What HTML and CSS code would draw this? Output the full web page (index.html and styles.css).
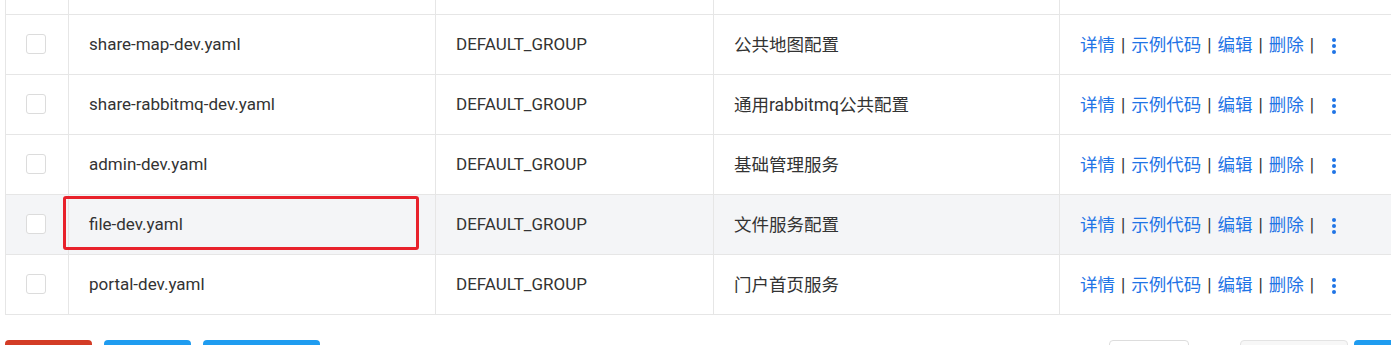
FILE: index.html
```html
<!DOCTYPE html>
<html lang="zh-CN">
<head>
  <meta charset="UTF-8" />
  <meta name="viewport" content="width=device-width, initial-scale=1.0" />
  <title>配置管理</title>
  <link rel="stylesheet" href="styles.css">
</head>
<body>
  <div class="page">
    <table class="config-table">
      <colgroup>
        <col class="col-check">
        <col class="col-id">
        <col class="col-group">
        <col class="col-desc">
        <col class="col-ops">
      </colgroup>
      <tbody id="configRows">
        <tr class="spacer-row"><td></td><td></td><td></td><td></td><td></td></tr>
      </tbody>
    </table>

    <div class="footer">
      <div class="batch">
        <button class="btn btn-danger" title="删除"></button>
        <button class="btn btn-primary" title="克隆"></button>
        <button class="btn btn-primary btn-wide" title="导出选中的配置"></button>
      </div>
      <div class="pager">
        <button class="pager-size" title="每页条数"></button>
        <button class="pager-prev" title="上一页"></button>
        <button class="pager-page" title="1"></button>
      </div>
    </div>
  </div>

  <script>
    const configs = [
      { id: "share-map-dev.yaml", group: "DEFAULT_GROUP", desc: "公共地图配置" },
      { id: "share-rabbitmq-dev.yaml", group: "DEFAULT_GROUP", desc: "通用rabbitmq公共配置" },
      { id: "admin-dev.yaml", group: "DEFAULT_GROUP", desc: "基础管理服务" },
      { id: "file-dev.yaml", group: "DEFAULT_GROUP", desc: "文件服务配置", active: true },
      { id: "portal-dev.yaml", group: "DEFAULT_GROUP", desc: "门户首页服务" }
    ];

    const ops = ["详情", "示例代码", "编辑", "删除"];

    function renderRows() {
      const body = document.getElementById("configRows");
      configs.forEach(cfg => {
        const tr = document.createElement("tr");
        if (cfg.active) tr.className = "is-hover";

        const links = ops.map(o => `<a class="op-link" href="#">${o}</a><span class="op-sep">|</span>`).join("");
        tr.innerHTML = `
          <td><span class="checkbox"></span></td>
          <td class="cell-id">${cfg.id}${cfg.active ? '<span class="mark"></span>' : ""}</td>
          <td>${cfg.group}</td>
          <td class="cell-desc">${cfg.desc}</td>
          <td class="cell-ops">${links}<a class="op-more" href="#"><svg width="4" height="16" viewBox="0 0 4 16"><circle cx="2" cy="2" r="2"/><circle cx="2" cy="8" r="2"/><circle cx="2" cy="14" r="2"/></svg></a></td>`;
        body.appendChild(tr);
      });
    }

    renderRows();
  </script>
</body>
</html>
```

FILE: styles.css
```css
html, body {
  margin: 0;
  overflow: hidden;
  background: #fff;
}

body {
  font-family: Roboto, "Noto Sans CJK SC", sans-serif;
  font-size: 17px;
  color: #333;
}

.page {
  padding-left: 5px;
  margin-top: -46px;
}

.config-table {
  border-collapse: collapse;
  table-layout: fixed;
  width: 1420px;
  border: 1px solid #e6e6e6;
}

.col-check { width: 63px; }
.col-id { width: 367px; }
.col-group { width: 278px; }
.col-desc { width: 346px; }

.config-table td {
  height: 57px;
  padding: 0 0 2px 20px;
  border: 1px solid #e6e6e6;
  vertical-align: middle;
  white-space: nowrap;
}

.config-table td.cell-desc,
.config-table td.cell-ops {
  font-size: 17.5px;
}

.config-table tr.is-hover td {
  background: #f4f5f7;
}

.checkbox {
  display: block;
  width: 18px;
  height: 18px;
  border: 1px solid #dcdcdc;
  border-radius: 3px;
  background: #fff;
}

.cell-id {
  position: relative;
}

/* red highlight frame around the selected data id */
.mark {
  position: absolute;
  left: -6px;
  top: 1px;
  width: 350px;
  height: 48px;
  border: 3px solid #e8212b;
  border-radius: 3px;
}

.op-link {
  color: #1f74e6;
  text-decoration: none;
}

.op-sep {
  color: #333;
  margin: 0 6px;
}

.op-more {
  display: inline-block;
  margin-left: 12px;
  vertical-align: middle;
  fill: #1f74e6;
}

.op-more svg {
  display: block;
}

.footer {
  display: flex;
  justify-content: space-between;
  margin-top: 25px;
}

.batch {
  display: flex;
  gap: 12px;
}

.btn {
  width: 87px;
  height: 32px;
  border: 0;
  border-radius: 4px;
}

.btn-wide {
  width: 117px;
}

.btn-danger {
  background: #d33c26;
}

.btn-primary {
  background: #1f9cf0;
}

.pager {
  display: flex;
  gap: 6px;
  margin-right: -40px;
}

.pager button {
  height: 32px;
  border-radius: 4px;
}

.pager-size {
  width: 80px;
  margin-right: 45px;
  background: #fff;
  border: 1px solid #ddd;
}

.pager-prev {
  width: 108px;
  background: #f7f7f7;
  border: 1px solid #e3e3e3;
}

.pager-page {
  width: 77px;
  background: #1f9cf0;
  border: 0;
}
```
